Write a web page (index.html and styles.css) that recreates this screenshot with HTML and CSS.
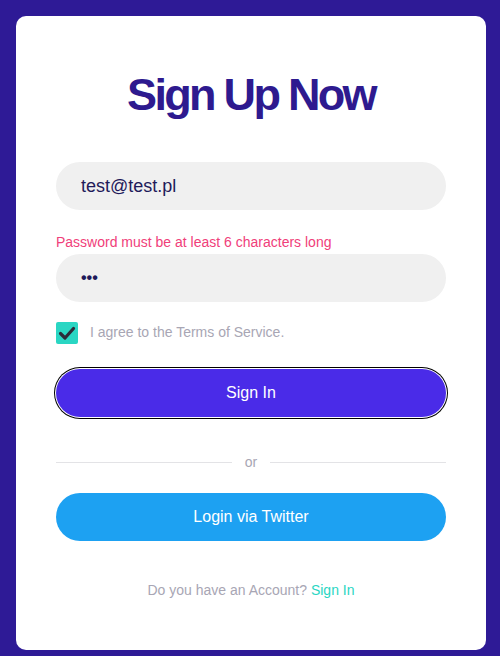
FILE: index.html
```html
<!DOCTYPE html>
<html lang="en">
<head>
<meta charset="utf-8">
<title>Sign Up Now</title>
<link rel="stylesheet" href="styles.css">
</head>
<body>
<main class="card">
  <h1 class="title">Sign Up Now</h1>
  <form class="form">
    <div class="input">test@test.pl</div>
    <p class="error">Password must be at least 6 characters long</p>
    <div class="input input-pass">&bull;&bull;&bull;</div>
    <label class="agree">
      <span class="checkbox">
        <svg viewBox="0 0 22 22" width="22" height="22"><path d="M4.5 11.5 L9 16 L17.5 6.5" fill="none" stroke="#2c2c3a" stroke-width="3.2" stroke-linecap="round" stroke-linejoin="round"/></svg>
      </span>
      <span class="agree-text">I agree to the Terms of Service.</span>
    </label>
    <button type="button" class="btn btn-primary">Sign In</button>
    <div class="divider"><span class="line"></span><span class="or">or</span><span class="line"></span></div>
    <button type="button" class="btn btn-twitter">Login via Twitter</button>
  </form>
  <p class="footer">Do you have an Account? <a class="link">Sign In</a></p>
</main>
</body>
</html>
```
FILE: styles.css
```css
* { box-sizing: border-box; }
html, body { margin: 0; padding: 0; }
body {
  background: #2e1a96;
  font-family: "Liberation Sans", Arial, sans-serif;
  padding: 16px 14px 6px 16px;
  height: 656px;
  overflow: hidden;
}
.card {
  background: #fff;
  border-radius: 10px;
  width: 470px;
  height: 634px;
  padding: 0 40px;
}
.title {
  margin: 0;
  padding-top: 53px;
  height: 146px;
  text-align: center;
  color: #2e1a8f;
  font-size: 45px;
  font-weight: 700;
  letter-spacing: -2.7px;
  line-height: 52px;
}
.form { display: flex; flex-direction: column; }
.input {
  height: 48px;
  border-radius: 24px;
  background: #f0f0f0;
  padding: 0 25px;
  display: flex;
  align-items: center;
  font-size: 18px;
  color: #1f1a5a;
}
.input-pass { font-size: 16px; letter-spacing: 0; font-weight: 700; }
.error {
  margin: 20px 0 0;
  height: 24px;
  font-size: 14px;
  line-height: 24px;
  color: #f0407a;
}
.agree {
  display: flex;
  align-items: center;
  margin-top: 20px;
  gap: 12px;
}
.checkbox {
  width: 22px;
  height: 22px;
  background: #2ad6c3;
  border-radius: 2px;
  display: flex;
}
.agree-text { font-size: 14px; color: #a8a6b4; margin-top: -2px; }
.btn {
  height: 48px;
  border: 0;
  border-radius: 24px;
  font-family: inherit;
  font-size: 16px;
  color: #fff;
  width: 100%;
}
.btn-primary {
  margin-top: 25px;
  background: #4a2be8;
  box-shadow: 0 0 0 1px #fff, 0 0 0 2px #000;
}
.divider {
  display: flex;
  align-items: center;
  gap: 13px;
  margin-top: 33px;
  height: 24px;
}
.line { flex: 1; height: 1px; background: #e3e3e6; }
.or { font-size: 14px; color: #a8a6b4; }
.btn-twitter {
  margin-top: 19px;
  background: #1da1f2;
}
.footer {
  margin: 41px 0 0;
  text-align: center;
  font-size: 14px;
  color: #a8a6b4;
}
.link { color: #2ad6c3; }
```
